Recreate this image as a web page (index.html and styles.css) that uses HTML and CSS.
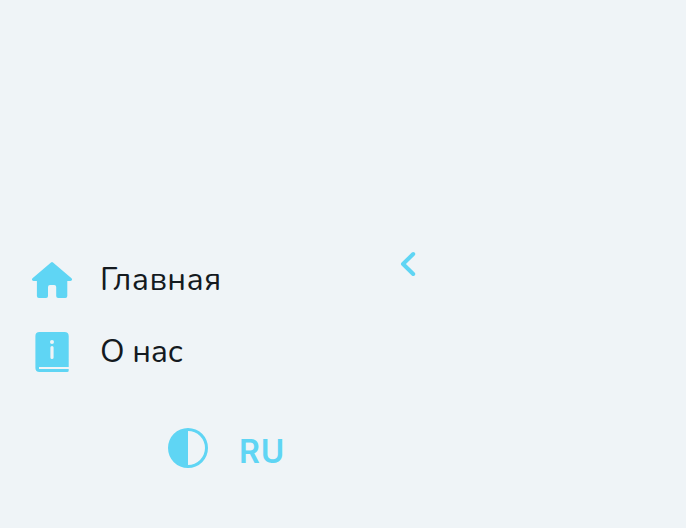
FILE: index.html
```
<!DOCTYPE html>
<html lang="ru">
<head>
<meta charset="utf-8">
<title>Меню</title>
<link rel="stylesheet" href="styles.css">
</head>
<body>
<aside class="sidebar">
  <nav class="menu">
    <a class="item"><svg class="icon" viewBox="0 0 40 40"><path d="M19 2.5Q20 1.7 21 2.5L39.5 18.2Q41 20.5 38.5 21H35.3V36Q35.3 38 33.3 38H26.2Q24.2 38 24.2 36V27Q24.2 25 22.2 25H18Q16 25 16 27V36Q16 38 14 38H6.9Q4.9 38 4.9 36V21H1.5Q-1 20.5.5 18.2Z"/></svg><span class="label home">Главная</span></a>
    <a class="item"><svg class="icon" viewBox="0 0 40 40"><path fill-rule="evenodd" d="M7.5 0H32.5Q36.7 0 36.7 4V35H7V37H36.7V38.5Q36.7 40 35.2 40H7.5Q3.4 40 3.4 36V4Q3.4 0 7.5 0ZM20 7.9a2 2 0 1 0 0 4 2 2 0 0 0 0-4ZM18.4 15.5V25.5Q18.4 27 20 27T21.6 25.5V15.5Q21.6 14 20 14T18.4 15.5Z"/></svg><span class="label about">О нас</span></a>
  </nav>
  <div class="controls">
    <svg class="icon" viewBox="0 0 40 40"><path fill-rule="evenodd" d="M20 0a20 20 0 1 0 0 40 20 20 0 0 0 0-40ZM20 3a17 17 0 0 1 0 34Z"/></svg>
    <span class="lang">RU</span>
  </div>
</aside>
<main class="content">
  <svg class="chevron" viewBox="0 0 16 26"><path d="M13.2 3L3 13L13.2 23"/></svg>
</main>
</body>
</html>
```
FILE: styles.css
```
body { margin: 0; display: flex; background: #fff; }
.sidebar { box-sizing: border-box; width: 392px; height: 528px; padding: 260px 0 0 32px; background: #eff4f7; }
.menu { display: flex; flex-direction: column; gap: 32px; }
.item { display: flex; align-items: center; gap: 28px; height: 40px; }
.icon { width: 40px; height: 40px; fill: #5fd5f4; flex: none; }
.label { font: 32px/40px Nunito, "Noto Sans", sans-serif; color: #141a1f; white-space: nowrap; }
.home { letter-spacing: 0.35px; }
.about { letter-spacing: -0.3px; }
.controls { display: flex; align-items: center; gap: 31px; margin: 56px 0 0 136px; height: 40px; }
.lang { font: 600 32px/40px Inter, sans-serif; letter-spacing: 0.8px; color: #5fd5f4; padding-top: 8px; }
.content { display: flex; align-items: flex-start; flex: 1; height: 528px; background: #eff4f7; }
.chevron { display: block; width: 16px; height: 26px; margin: 251px 0 0 8px; fill: none; stroke: #5fd5f4; stroke-width: 4; stroke-linecap: round; stroke-linejoin: round; }
```
